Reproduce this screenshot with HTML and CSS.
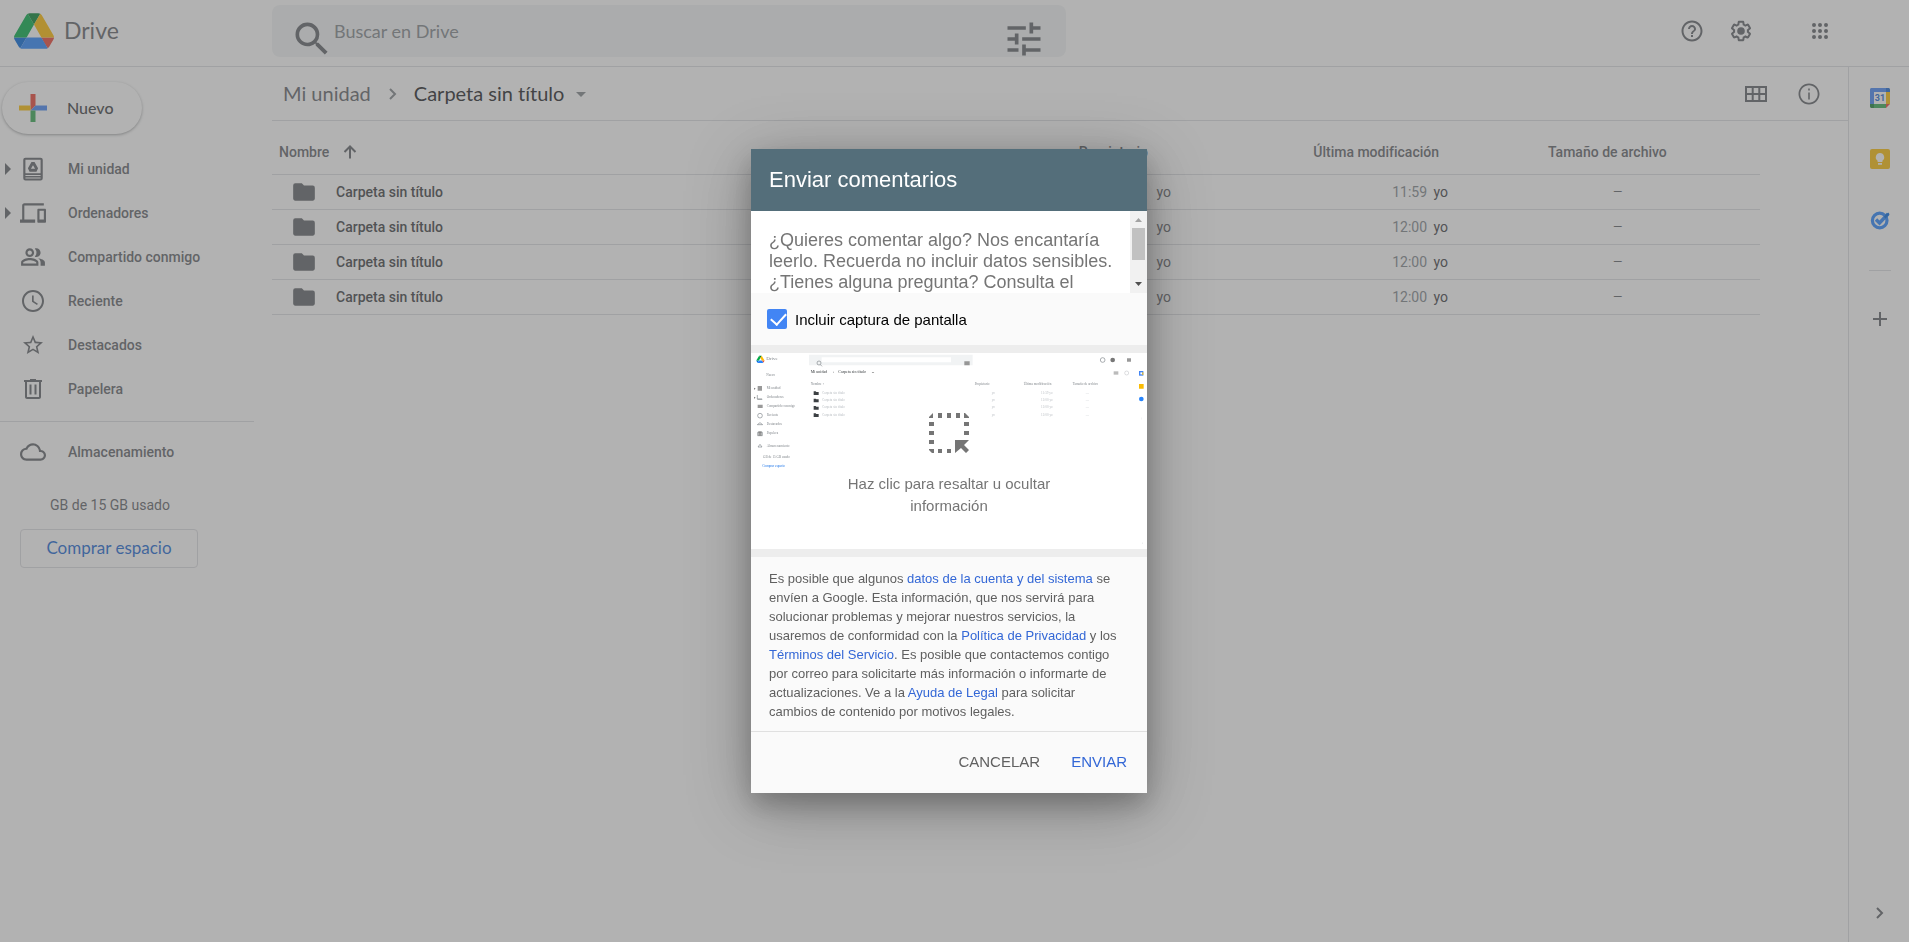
FILE: index.html
```html
<!DOCTYPE html>
<html lang="es">
<head>
<meta charset="utf-8">
<meta name="viewport" content="width=device-width, initial-scale=1">
<title>Carpeta sin título - Drive</title>
<link rel="stylesheet" href="styles.css">
</head>
<body>
<div class="app">
  <header class="topbar">
    <a class="brand" href="#">
      <svg class="brand-logo" viewBox="0 0 87.3 78" aria-hidden="true">
        <path fill="#0066da" d="m6.6 66.85 3.85 6.65c.8 1.4 1.95 2.5 3.3 3.3l13.75-23.8h-27.5c0 1.55.4 3.1 1.2 4.5z"/>
        <path fill="#00ac47" d="m43.65 25-13.75-23.8c-1.35.8-2.5 1.9-3.3 3.3l-25.4 44a9.06 9.06 0 0 0-1.2 4.5h27.5z"/>
        <path fill="#ea4335" d="m73.55 76.8c1.35-.8 2.5-1.9 3.3-3.3l1.6-2.75 7.65-13.25c.8-1.4 1.2-2.95 1.2-4.5h-27.502l5.852 11.5z"/>
        <path fill="#00832d" d="m43.65 25 13.75-23.8c-1.35-.8-2.9-1.2-4.5-1.2h-18.5c-1.6 0-3.15.45-4.5 1.2z"/>
        <path fill="#2684fc" d="m59.8 53h-32.3l-13.75 23.8c1.35.8 2.9 1.2 4.5 1.2h50.8c1.6 0 3.15-.45 4.5-1.2z"/>
        <path fill="#ffba00" d="m73.4 26.5-12.7-22c-.8-1.4-1.95-2.5-3.3-3.3l-13.75 23.8 16.15 28h27.45c0-1.55-.4-3.1-1.2-4.5z"/>
      </svg>
      <span class="brand-name">Drive</span>
    </a>
    <form class="search" role="search">
      <button class="search-button" type="button" aria-label="Buscar">
        <svg viewBox="0 0 24 24"><path d="M15.5 14h-.79l-.28-.27A6.47 6.47 0 0 0 16 9.5 6.5 6.5 0 1 0 9.5 16c1.61 0 3.09-.59 4.23-1.57l.27.28v.79l5 4.99L20.49 19l-4.99-5zm-6 0C7.01 14 5 11.99 5 9.5S7.01 5 9.5 5 14 7.01 14 9.5 11.99 14 9.5 14z"/></svg>
      </button>
      <input class="search-input" type="text" placeholder="Buscar en Drive" aria-label="Buscar en Drive">
      <button class="search-button" type="button" aria-label="Opciones de búsqueda">
        <svg viewBox="0 0 24 24"><path d="M3 17v2h6v-2H3zM3 5v2h10V5H3zm10 16v-2h8v-2h-8v-2h-2v6h2zM7 9v2H3v2h4v2h2V9H7zm14 4v-2H11v2h10zm-6-4h2V7h4V5h-4V3h-2v6z"/></svg>
      </button>
    </form>
    <div class="top-actions">
      <button class="icon-button" type="button" aria-label="Asistencia">
        <svg viewBox="0 0 24 24"><path d="M11 18h2v-2h-2v2zm1-16.500C6.200 1.500 1.500 6.200 1.500 12S6.200 22.500 12 22.500 22.500 17.800 22.500 12 17.800 1.500 12 1.500zm0 19c-4.700 0-8.500-3.800-8.500-8.500S7.300 3.500 12 3.500s8.500 3.800 8.500 8.500-3.800 8.500-8.500 8.500zM12 6c-2.210 0-4 1.790-4 4h2c0-1.100.9-2 2-2s2 .9 2 2c0 2-3 1.750-3 5h2c0-2.250 3-2.500 3-5 0-2.210-1.790-4-4-4z"/></svg>
      </button>
      <button class="icon-button" type="button" aria-label="Configuración">
        <svg viewBox="0 0 24 24"><path d="M13.85 22.25h-3.7c-.74 0-1.36-.54-1.45-1.27l-.27-1.89c-.27-.14-.53-.29-.79-.46l-1.8.72c-.7.26-1.47-.03-1.81-.65L2.2 15.53c-.35-.66-.2-1.44.36-1.88l1.53-1.19c-.01-.15-.02-.3-.02-.46 0-.15.01-.31.02-.46l-1.52-1.19c-.59-.45-.74-1.26-.37-1.88l1.85-3.19c.34-.62 1.11-.9 1.79-.63l1.81.73c.26-.17.52-.32.78-.46l.27-1.91c.09-.7.71-1.25 1.44-1.25h3.7c.74 0 1.36.54 1.45 1.27l.27 1.89c.27.14.53.29.79.46l1.8-.72c.71-.26 1.48.03 1.82.65l1.84 3.18c.36.66.2 1.44-.36 1.88l-1.52 1.19c.01.15.02.3.02.46s-.01.31-.02.46l1.52 1.19c.56.45.72 1.23.37 1.86l-1.86 3.22c-.34.62-1.11.9-1.8.63l-1.8-.72c-.26.17-.52.32-.78.46l-.27 1.91c-.1.68-.72 1.22-1.46 1.22zm-3.23-2h2.76l.37-2.55.53-.22c.44-.18.88-.44 1.34-.78l.45-.34 2.38.96 1.38-2.4-2.03-1.58.07-.56c.03-.26.06-.51.06-.78s-.03-.53-.06-.78l-.07-.56 2.03-1.58-1.39-2.4-2.39.96-.45-.35c-.42-.32-.87-.58-1.33-.77l-.52-.22-.37-2.55h-2.76l-.37 2.55-.53.21c-.44.19-.88.44-1.34.79l-.45.33-2.38-.95-1.39 2.39 2.03 1.58-.07.56a7 7 0 0 0-.06.79c0 .26.02.53.06.78l.07.56-2.03 1.58 1.38 2.4 2.39-.96.45.35c.43.33.86.58 1.33.77l.53.22.38 2.55z"/><circle cx="12" cy="12" r="3.8"/></svg>
      </button>
      <button class="icon-button apps" type="button" aria-label="Aplicaciones de Google">
        <svg viewBox="0 0 24 24"><path d="M6 8a2 2 0 1 0 0-4 2 2 0 0 0 0 4zm6 12a2 2 0 1 0 0-4 2 2 0 0 0 0 4zm-6 0a2 2 0 1 0 0-4 2 2 0 0 0 0 4zm0-6a2 2 0 1 0 0-4 2 2 0 0 0 0 4zm6 0a2 2 0 1 0 0-4 2 2 0 0 0 0 4zm4-8a2 2 0 1 0 4 0 2 2 0 0 0-4 0zm-4 2a2 2 0 1 0 0-4 2 2 0 0 0 0 4zm6 6a2 2 0 1 0 0-4 2 2 0 0 0 0 4zm0 6a2 2 0 1 0 0-4 2 2 0 0 0 0 4z"/></svg>
      </button>
    </div>
  </header>

  <div class="body">
    <aside class="sidebar">
      <button class="new-button" type="button">
        <svg viewBox="0 0 28 28" aria-hidden="true">
          <path fill="#ea4335" d="M11.500 0h5v11.500l-5 5z"/>
          <path fill="#4285f4" d="M28 11.500v5H11.500l5-5z"/>
          <path fill="#34a853" d="M11.500 16.500h5V28h-5z"/>
          <path fill="#fbbc04" d="M0 11.500h11.500v5H0z"/>
        </svg>
        <span class="new-label">Nuevo</span>
      </button>
      <nav class="nav">
        <a class="nav-item" href="#">
          <svg class="expand" viewBox="0 0 6 12"><path d="M0 0l6 6-6 6z"/></svg>
          <svg class="nav-icon wide" viewBox="0 0 24 24"><path fill-rule="evenodd" d="M5 1.500h14a2 2 0 0 1 2 2v17a2 2 0 0 1-2 2H5a2 2 0 0 1-2-2v-17a2 2 0 0 1 2-2zM5 3.500V16h14V3.500zM5 17.500v1h14v-1zM5 19.800v.9h14v-.9zM10.600 5.500h2.800l3.300 5.700-1.500 3.300H8.800l-1.500-3.300zM12 8.500l-1.900 3.300h3.800z"/></svg>
          <span>Mi unidad</span>
        </a>
        <a class="nav-item" href="#">
          <svg class="expand" viewBox="0 0 6 12"><path d="M0 0l6 6-6 6z"/></svg>
          <svg class="nav-icon wide" viewBox="0 0 24 24"><path d="M4 5h18V3H4c-1.100 0-2 .9-2 2v13H0v3h14v-3H4V5zm19 3h-6c-.55 0-1 .45-1 1v11c0 .55.45 1 1 1h6c.55 0 1-.45 1-1V9c0-.55-.45-1-1-1zm-1 10h-4v-8h4v8z"/></svg>
          <span>Ordenadores</span>
        </a>
        <a class="nav-item" href="#">
          <span class="expand"></span>
          <svg class="nav-icon wide" viewBox="0 0 24 24"><path d="M9 12c2.210 0 4-1.790 4-4s-1.790-4-4-4-4 1.790-4 4 1.790 4 4 4zm0-6c1.100 0 2 .9 2 2s-.9 2-2 2-2-.9-2-2 .9-2 2-2zm0 7c-2.670 0-8 1.340-8 4v3h16v-3c0-2.660-5.330-4-8-4zm6 5H3v-.99C3.200 16.290 6.300 15 9 15s5.800 1.290 6 2v1zM15 12c2.210 0 4-1.790 4-4s-1.790-4-4-4c-.47 0-.91.100-1.330.24a5.980 5.980 0 0 1 0 7.520c.42.140.86.240 1.330.240zm1.660 1.130C18.030 14.050 19 15.320 19 17v3h4v-3c0-2.180-3.570-3.470-6.340-3.870z"/></svg>
          <span>Compartido conmigo</span>
        </a>
        <a class="nav-item" href="#">
          <span class="expand"></span>
          <svg class="nav-icon" viewBox="0 0 24 24"><path d="M12 1C5.900 1 1 5.900 1 12s4.900 11 11 11 11-4.900 11-11S18.100 1 12 1zm0 20c-5 0-9-4-9-9s4-9 9-9 9 4 9 9-4 9-9 9zM12.700 6.500h-1.700v6.300l5 3.300.9-1.300-4.200-2.800z"/></svg>
          <span>Reciente</span>
        </a>
        <a class="nav-item" href="#">
          <span class="expand"></span>
          <svg class="nav-icon" viewBox="0 0 24 24"><path d="M22 9.240l-7.190-.62L12 2 9.190 8.630 2 9.240l5.460 4.730L5.820 21 12 17.270 18.180 21l-1.630-7.030L22 9.240zM12 15.400l-3.760 2.270 1-4.280-3.320-2.880 4.380-.38L12 6.100l1.710 4.040 4.380.38-3.320 2.880 1 4.280L12 15.400z"/></svg>
          <span>Destacados</span>
        </a>
        <a class="nav-item" href="#">
          <span class="expand"></span>
          <svg class="nav-icon" viewBox="0 0 24 24"><path d="M15 2H9v1H3v2h1v15c0 1.100.9 2 2 2h12c1.100 0 2-.9 2-2V5h1V3h-6V2zm3 18H6V5h12v15zM8.500 7.500h2v10h-2zm5 0h2v10h-2z"/></svg>
          <span>Papelera</span>
        </a>
      </nav>
      <div class="storage">
        <a class="nav-item" href="#">
          <span class="expand"></span>
          <svg class="nav-icon wide" viewBox="0 0 24 24"><path d="M19.350 10.040A7.490 7.490 0 0 0 12 4C9.110 4 6.600 5.640 5.350 8.040A5.994 5.994 0 0 0 0 14c0 3.310 2.690 6 6 6h13c2.760 0 5-2.240 5-5 0-2.640-2.050-4.780-4.650-4.960zM19 18H6c-2.210 0-4-1.790-4-4s1.790-4 4-4h.71C7.370 7.690 9.480 6 12 6c3.040 0 5.500 2.460 5.500 5.500v.5H19c1.660 0 3 1.340 3 3s-1.340 3-3 3z"/></svg>
          <span>Almacenamiento</span>
        </a>
        <p class="quota">GB de 15 GB usado</p>
        <button class="buy-button" type="button">Comprar espacio</button>
      </div>
    </aside>

    <main class="main">
      <div class="toolbar">
        <nav class="crumbs" aria-label="Ruta">
          <a class="crumb" href="#">Mi unidad</a>
          <svg class="crumb-sep" viewBox="0 0 8 12"><path d="M1 1l5 5-5 5" /></svg>
          <button class="crumb current" type="button">Carpeta sin título
            <svg class="caret" viewBox="0 0 10 5"><path d="M0 0h10L5 5z"/></svg>
          </button>
        </nav>
        <div class="view-actions">
          <button class="icon-button" type="button" aria-label="Diseño de cuadrícula">
            <svg viewBox="0 0 24 24"><path d="M1 4v16h22V4H1zm6.700 14H3v-5h4.700v5zm0-7H3V6h4.700v5zm6.600 7H9.700v-5h4.600v5zm0-7H9.700V6h4.600v5zM21 18h-4.700v-5H21v5zm0-7h-4.700V6H21v5z"/></svg>
          </button>
          <button class="icon-button" type="button" aria-label="Ver detalles">
            <svg viewBox="0 0 24 24"><path d="M11.200 17.500h1.600v-7h-1.600v7zM12 1.500C6.200 1.500 1.500 6.200 1.500 12S6.200 22.500 12 22.500 22.500 17.800 22.500 12 17.800 1.500 12 1.500zm0 19.200c-4.800 0-8.700-3.900-8.700-8.700S7.200 3.300 12 3.300s8.700 3.900 8.700 8.700-3.900 8.700-8.700 8.700zM11.200 8.500h1.600V6.500h-1.600v2z"/></svg>
          </button>
        </div>
      </div>
      <table class="files">
        <thead>
          <tr>
            <th class="name" scope="col"><span class="name-cell">Nombre <svg class="sort" viewBox="0 0 14 14"><path d="M7 13.500V1.500M1.500 7L7 1.500 12.500 7"/></svg></span></th>
            <th class="owner" scope="col">Propietario</th>
            <th class="modified" scope="col">Última modificación</th>
            <th class="size" scope="col">Tamaño de archivo</th>
          </tr>
        </thead>
        <tbody>
          <tr>
            <td class="name"><span class="name-cell"><svg class="folder" viewBox="0 0 24 24"><path d="M10 4H4a2 2 0 0 0-2 2v12c0 1.100.9 2 2 2h16c1.100 0 2-.9 2-2V8a2 2 0 0 0-2-2h-8l-2-2z"/></svg>Carpeta sin título</span></td>
            <td class="owner">yo</td><td class="modified">11:59 <span class="who">yo</span></td><td class="size">—</td>
          </tr>
          <tr>
            <td class="name"><span class="name-cell"><svg class="folder" viewBox="0 0 24 24"><path d="M10 4H4a2 2 0 0 0-2 2v12c0 1.100.9 2 2 2h16c1.100 0 2-.9 2-2V8a2 2 0 0 0-2-2h-8l-2-2z"/></svg>Carpeta sin título</span></td>
            <td class="owner">yo</td><td class="modified">12:00 <span class="who">yo</span></td><td class="size">—</td>
          </tr>
          <tr>
            <td class="name"><span class="name-cell"><svg class="folder" viewBox="0 0 24 24"><path d="M10 4H4a2 2 0 0 0-2 2v12c0 1.100.9 2 2 2h16c1.100 0 2-.9 2-2V8a2 2 0 0 0-2-2h-8l-2-2z"/></svg>Carpeta sin título</span></td>
            <td class="owner">yo</td><td class="modified">12:00 <span class="who">yo</span></td><td class="size">—</td>
          </tr>
          <tr>
            <td class="name"><span class="name-cell"><svg class="folder" viewBox="0 0 24 24"><path d="M10 4H4a2 2 0 0 0-2 2v12c0 1.100.9 2 2 2h16c1.100 0 2-.9 2-2V8a2 2 0 0 0-2-2h-8l-2-2z"/></svg>Carpeta sin título</span></td>
            <td class="owner">yo</td><td class="modified">12:00 <span class="who">yo</span></td><td class="size">—</td>
          </tr>
        </tbody>
      </table>
    </main>

    <aside class="rail">
      <button class="rail-button" type="button" aria-label="Calendar">
        <svg viewBox="0 0 20 20">
          <path fill="#fff" d="M4 4h12v12H4z"/>
          <path fill="#4285f4" d="M1.500 0H16v4H4v12H0V1.500C0 .7.7 0 1.500 0z"/>
          <path fill="#1967d2" d="M16 0h2.500c.8 0 1.500.7 1.500 1.500V4h-4z"/>
          <path fill="#fbbc04" d="M16 4h4v12h-4z"/>
          <path fill="#34a853" d="M4 16h12v4H4z"/>
          <path fill="#188038" d="M0 16h4v4H1.500C.7 20 0 19.300 0 18.500z"/>
          <path fill="#ea4335" d="M16 16h4l-4 4z"/>
          <text class="cal-day" x="10" y="13">31</text>
        </svg>
      </button>
      <button class="rail-button" type="button" aria-label="Keep">
        <svg viewBox="0 0 20 20">
          <rect width="20" height="20" rx="2" fill="#fbbc04"/>
          <path fill="#fff" d="M10 4a4.300 4.300 0 0 0-2.400 7.800V13h4.800v-1.200A4.300 4.300 0 0 0 10 4zM8 14h4v1.800H8z"/>
        </svg>
      </button>
      <button class="rail-button" type="button" aria-label="Tasks">
        <svg viewBox="0 0 20 20">
          <circle cx="9.700" cy="10.500" r="7.300" fill="none" stroke="#2684fc" stroke-width="3.200"/>
          <path d="M6 9.500l3.500 3.500 8.500-9" fill="none" stroke="#2684fc" stroke-width="3.400"/>
          <path d="M13.800 6.800l2-2.200L18.200 2.500l1.400 1.700-4 4.200z" fill="#0066da"/>
        </svg>
      </button>
      <hr class="rail-line">
      <button class="rail-button add" type="button" aria-label="Obtener complementos">
        <svg viewBox="0 0 14 14"><path d="M7 0v14M0 7h14"/></svg>
      </button>
      <button class="rail-button hide" type="button" aria-label="Ocultar panel lateral">
        <svg viewBox="0 0 8 12"><path d="M1 1l5 5-5 5"/></svg>
      </button>
    </aside>
  </div>
</div>

<div class="scrim">
  <section class="dialog" role="dialog" aria-modal="true" aria-labelledby="dialog-title">
    <h1 class="dialog-title" id="dialog-title">Enviar comentarios</h1>
    <div class="comment">
      <textarea class="comment-input" aria-label="Comentarios" placeholder="¿Quieres comentar algo? Nos encantaría leerlo. Recuerda no incluir datos sensibles. ¿Tienes alguna pregunta? Consulta el Centro de Ayuda."></textarea>
      <div class="scrollbar" aria-hidden="true">
        <svg viewBox="0 0 17 17"><path fill="#a3a3a3" d="M5 11l3.500-4 3.500 4z"/></svg>
        <div class="thumb"></div>
        <svg viewBox="0 0 17 17"><path fill="#505050" d="M5 6l3.500 4L12 6z"/></svg>
      </div>
    </div>
    <div class="capture">
      <input class="check" type="checkbox" id="capture" checked>
      <label for="capture">Incluir captura de pantalla</label>
    </div>
    <button class="preview" type="button">
      <svg class="shot" viewBox="0 0 1188 585" aria-hidden="true">
        <g transform="translate(16 8) scale(.28)">
          <path fill="#0066da" d="m6.600 66.850 3.850 6.650c.8 1.400 1.950 2.500 3.300 3.300l13.750-23.800h-27.500z"/>
          <path fill="#00ac47" d="m43.650 25-13.750-23.800-28.700 47.300-1.200 4.500h27.500z"/>
          <path fill="#ea4335" d="m73.550 76.800 12.550-19.300 1.200-4.500h-27.500z"/>
          <path fill="#00832d" d="m43.650 25 13.750-23.800-4.500-1.200h-18.500l-4.500 1.200z"/>
          <path fill="#2684fc" d="m59.800 53h-32.300l-13.750 23.800 4.500 1.200h50.800l4.500-1.200z"/>
          <path fill="#ffba00" d="m73.400 26.500-16-25.300-13.750 23.800 16.150 28h27.450z"/>
        </g>
        <path fill="#f1f3f4" d="M174 5h491v32H174z"/><path fill="#fff" d="M212 13h388v15H212z"/>
        <g class="shot-line"><circle cx="204" cy="30" r="6"/><path d="M208 35l5 5"/><circle cx="1055" cy="21" r="7"/><circle cx="1127" cy="60" r="6" opacity=".4"/><circle cx="27" cy="188" r="7"/><path d="M19 139h15M19 126v12h14M21 282l6-8 6 8h-12zM19 215l8-6 8 6zM20 238v10h14v-10z"/></g>
        <g fill="#777"><circle cx="1085" cy="21" r="7"/><path d="M20 99h13v14H20zM20 155h15v10H20zM22 235h10v13H22zM640 25h16v12h-16zM1128 16h12v10h-12z" opacity=".75"/><path d="M9 104l5 3-5 3zM9 131l5 3-5 3zM362 57h8l-4 3z"/><path d="M1088 55h14v10h-14z" opacity=".5"/></g>
        <path fill="#3c4043" d="M188 115h6l2 2h7v9h-15zM188 137h6l2 2h7v9h-15zM188 159h6l2 2h7v9h-15zM188 181h6l2 2h7v9h-15z"/>
        <path fill="#4285f4" d="M1164 54h13v14h-13z"/><path fill="#fff" d="M1168 58h6v6h-6z"/><path fill="#fbbc04" d="M1164 93h14v14h-14zM1174 58h3v8h-3z"/><circle cx="1171" cy="138" r="7" fill="#2684fc"/>
        <g class="shot-text">
          <text x="46" y="22" class="big">Drive</text><text x="46" y="69">Nuevo</text>
          <text x="47" y="108">Mi unidad</text><text x="47" y="135">Ordenadores</text><text x="47" y="162">Compartido conmigo</text><text x="47" y="189">Reciente</text><text x="47" y="216">Destacados</text><text x="47" y="244">Papelera</text><text x="47" y="283">Almacenamiento</text><text x="36" y="315">GB de 15 GB usado</text><text x="34" y="342" class="link">Comprar espacio</text>
          <g class="dark"><text x="179" y="61">Mi unidad</text><text x="246" y="61">›</text><text x="262" y="61">Carpeta sin título</text></g>
          <text x="179" y="97">Nombre ↑</text><text x="671" y="97">Propietario</text><text x="818" y="97">Última modificación</text><text x="965" y="97">Tamaño de archivo</text>
        </g>
        <g class="shot-text faint">
          <text x="213" y="122">Carpeta sin título</text><text x="722" y="122">yo</text><text x="870" y="122">11:59 yo</text><text x="1004" y="122">—</text>
          <text x="213" y="144">Carpeta sin título</text><text x="722" y="144">yo</text><text x="870" y="144">12:00 yo</text><text x="1004" y="144">—</text>
          <text x="213" y="166">Carpeta sin título</text><text x="722" y="166">yo</text><text x="870" y="166">12:00 yo</text><text x="1004" y="166">—</text>
          <text x="213" y="188">Carpeta sin título</text><text x="722" y="188">yo</text><text x="870" y="188">12:00 yo</text><text x="1004" y="188">—</text>
          <text x="1168" y="202">+</text><text x="1172" y="572">›</text>
        </g>
      </svg>
      <span class="preview-hint">
        <svg class="select-icon" viewBox="0 0 40 40" aria-hidden="true"><path d="M0 5V4l4-4v5zM9 0h4v5H9zM18 0h4v5h-4zM27 0h4v5h-4zM35 0h1l4 4v1h-5zM0 9h5v4H0zM0 18h5v4H0zM0 27h5v4H0zM0 36h5v4H3l-3-3zM9 36h4v4H9zM18 36h4v4h-4zM35 9h5v4h-5zM35 18h5v4h-5zM26 40V27h14l-5 5 5 5-3 3-5-5z"/></svg>
        <span>Haz clic para resaltar u ocultar información</span>
      </span>
    </button>
    <p class="legal">Es posible que algunos <a href="#">datos de la cuenta y del sistema</a> se envíen a Google. Esta información, que nos servirá para solucionar problemas y mejorar nuestros servicios, la usaremos de conformidad con la <a href="#">Política de Privacidad</a> y los <a href="#">Términos del Servicio</a>. Es posible que contactemos contigo por correo para solicitarte más información o informarte de actualizaciones. Ve a la <a href="#">Ayuda de Legal</a> para solicitar cambios de contenido por motivos legales.</p>
    <div class="dialog-actions">
      <button class="text-button" type="button">CANCELAR</button>
      <button class="text-button primary" type="button">ENVIAR</button>
    </div>
  </section>
</div>
</body>
</html>
```

FILE: styles.css
```css
* { box-sizing: border-box; }

body {
  margin: 0;
  font-family: Roboto, "Liberation Sans", sans-serif;
  font-size: 14px;
  font-variant-ligatures: none;
  color: #5f6368;
  background: #fff;
}

button {
  padding: 0;
  border: 0;
  background: none;
  font: inherit;
  font-variant-ligatures: none;
  color: inherit;
}

a { color: inherit; text-decoration: none; }
svg { display: block; flex: none; fill: #5f6368; }

.app { display: flex; flex-direction: column; height: 100vh; }

/* Top bar */
.topbar {
  display: flex;
  align-items: flex-start;
  height: 67px;
  padding-top: 5px;
  border-bottom: 1px solid #dadce0;
}

.brand {
  display: flex;
  align-items: center;
  gap: 10px;
  width: 272px;
  height: 52px;
  padding-left: 14px;
}

.brand-logo { width: 40px; height: 36px; }

.brand-name {
  padding-bottom: 2px;
  font-family: Lato, sans-serif;
  font-size: 23px;
}

.search {
  display: flex;
  flex: 0 1 794px;
  height: 52px;
  padding: 0 20px 0 18px;
  border-radius: 8px;
  background: #f1f3f4;
}

.search-button { width: 44px; height: 44px; margin-top: 12px; }
.search-button svg { width: 44px; height: 44px; }

.search-input {
  flex: 1;
  min-width: 0;
  height: 52px;
  padding: 0;
  border: 0;
  background: none;
  font: 18px Lato, sans-serif;
  color: #5f6368;
}

.search-input::placeholder { color: #80868b; }

.top-actions {
  display: flex;
  align-items: center;
  gap: 25px;
  height: 52px;
  margin-left: auto;
  padding-right: 77px;
}

.icon-button svg { width: 24px; height: 24px; }
.apps { margin-left: 30px; }

/* Layout under the top bar */
.body { display: flex; flex: 1; min-height: 0; }

.sidebar { width: 254px; margin-right: 18px; padding-top: 15px; flex: none; }

.new-button {
  display: flex;
  align-items: center;
  gap: 20px;
  height: 52px;
  margin: 0 0 13px 2px;
  padding: 0 28px 0 17px;
  border-radius: 26px;
  box-shadow: 0 1px 2px rgba(60, 64, 67, .3), 0 1px 3px 1px rgba(60, 64, 67, .15);
  font-family: Lato, sans-serif;
  font-size: 16px;
  font-weight: 500;
  color: #3c4043;
}

.new-button svg { width: 28px; height: 28px; }
.new-label { padding-bottom: 2px; }

.nav-item {
  display: flex;
  align-items: center;
  height: 44px;
  font-weight: 500;
}

.expand { width: 6px; height: 12px; margin-left: 5px; }
.nav-icon { width: 24px; height: 24px; margin: 0 23px 0 10px; }
.nav-icon.wide { width: 26px; height: 26px; margin: 0 22px 0 9px; }

.storage { margin-top: 10px; padding-top: 8px; border-top: 1px solid #dadce0; }

.quota { margin: 19px 0 12px 50px; line-height: 24px; }

.buy-button {
  width: 178px;
  height: 39px;
  margin-left: 20px;
  padding-bottom: 2px;
  border: 1px solid #dadce0;
  border-radius: 4px;
  font-family: Lato, sans-serif;
  font-size: 17px;
  color: #1967d2;
}

/* Main column */
.main { flex: 1; min-width: 0; }

.toolbar {
  display: flex;
  justify-content: space-between;
  height: 54px;
  padding: 0 27px 0 11px;
  border-bottom: 1px solid #dadce0;
}

.crumbs, .view-actions { display: flex; align-items: center; }
.view-actions { gap: 29px; }

.crumb {
  display: flex;
  align-items: center;
  gap: 12px;
  padding-bottom: 2px;
  font-family: Lato, sans-serif;
  font-size: 20px;
}

.crumb.current { color: #202124; }
.crumb-sep { width: 8px; height: 12px; margin: 0 17px 0 18px; fill: none; stroke: #80868b; stroke-width: 2; }
.caret { width: 10px; height: 5px; margin-top: 4px; fill: #80868b; }

.files {
  width: calc(100% - 88px);
  border-collapse: collapse;
  table-layout: fixed;
}

.files th { height: 53px; padding: 9px 0 0; text-align: left; font-weight: 500; }
.files td { height: 35px; padding: 0; }
.files tr { border-bottom: 1px solid #dadce0; }
.files th.name { padding-left: 7px; }
.files td.name { padding-left: 19px; font-weight: 500; color: #3c4043; }
.files .owner, .files .modified { width: 277px; text-align: right; color: #5f6368; }
.files td.modified { color: #80868b; }
.files th.owner { padding-right: 23px; }
.files th.modified { padding-right: 9px; }
.files .size { width: 312px; }
.files th.size { padding-left: 100px; }
.files td.size { padding-left: 165px; font-size: 12px; }

.name-cell { display: flex; align-items: center; gap: 19px; }
.files th .name-cell { gap: 14px; }
.folder { width: 26px; height: 26px; }
.sort { width: 14px; height: 14px; fill: none; stroke: #5f6368; stroke-width: 2; }
.who { margin-left: 3px; color: #3c4043; }

/* Add-on rail */
.rail {
  display: flex;
  flex-direction: column;
  align-items: center;
  width: 61px;
  flex: none;
  padding: 21px 0 23px 2px;
  border-left: 1px solid #dadce0;
}

.rail-button { height: 20px; margin-bottom: 41px; }
.rail-button svg { width: 20px; height: 20px; }
.cal-day { font: bold 9px Roboto, sans-serif; fill: #1967d2; text-anchor: middle; }
.rail-line { width: 22px; margin: -1px 0 41px; border: 0; border-top: 1px solid #dadce0; }
.rail-button.add { height: 14px; }
.rail-button.add svg { width: 14px; height: 14px; fill: none; stroke: #5f6368; stroke-width: 2; }
.rail-button.hide { height: 12px; margin: auto 0 0; }
.rail-button.hide svg { width: 8px; height: 12px; fill: none; stroke: #5f6368; stroke-width: 2; }

/* Feedback dialog */
.scrim {
  position: fixed;
  inset: 0;
  display: flex;
  justify-content: center;
  align-items: center;
  padding-right: 11px;
  background: rgba(102, 102, 102, .5);
}

.dialog {
  width: 396px;
  background: #fafafa;
  box-shadow: 0 12px 60px rgba(0, 0, 0, .3), 0 12px 24px rgba(0, 0, 0, .2);
  font-family: "Liberation Sans", Arial, sans-serif;
}

.dialog-title {
  margin: 0;
  padding: 0 18px;
  background: #546e7a;
  font-size: 22px;
  font-weight: 400;
  line-height: 62px;
  color: #fff;
}

.comment { display: flex; height: 82px; background: #fff; }

.comment-input {
  flex: 1;
  min-width: 0;
  padding: 19px 8px 0 18px;
  border: 0;
  background: none;
  font: 18px/21px "Liberation Sans", Arial, sans-serif;
  resize: none;
  overflow: hidden;
}

.comment-input::placeholder { color: #757575; }

.scrollbar { display: flex; flex-direction: column; width: 17px; background: #f1f1f1; }
.scrollbar svg { width: 17px; height: 17px; }
.thumb { height: 32px; margin: 0 2px auto; background: #c1c1c1; }

.capture {
  display: flex;
  align-items: center;
  gap: 8px;
  height: 52px;
  padding: 0 16px;
  font-size: 15px;
  color: #000;
}

.check {
  width: 20px;
  height: 20px;
  margin: 0;
  border-radius: 2px;
  appearance: none;
  background: #4285f4;
}

.check:checked::after {
  content: "";
  display: block;
  width: 7px;
  height: 13px;
  margin: 1px 0 0 7px;
  border: solid #fff;
  border-width: 0 2px 2px 0;
  transform: rotate(42deg);
}

.preview {
  display: grid;
  width: 100%;
  min-height: 212px;
  border: solid #ededed;
  border-width: 8px 0;
  background: #fff;
}

.preview > * { grid-area: 1 / 1; }
.shot { width: 100%; }
.shot-line { fill: none; stroke: #80868b; stroke-width: 2; }
.shot-text { font: 10px "Liberation Serif", serif; fill: #80868b; }
.shot-text .big { font-size: 15px; }
.shot-text .dark { font-size: 12px; fill: #3c4043; }
.shot-text .link { fill: #1a73e8; }
.shot-text.faint { fill: #bdc1c6; }

.preview-hint {
  display: flex;
  flex-direction: column;
  align-items: center;
  gap: 20px;
  padding: 60px 80px 0;
  font-size: 15px;
  line-height: 22px;
  color: #757575;
}

.select-icon { width: 40px; height: 40px; fill: #757575; }

.legal {
  margin: 0;
  padding: 12px 24px 10px 18px;
  font-size: 13px;
  line-height: 19px;
  color: #5f5f5f;
}

.legal a { color: #3367d6; }

.dialog-actions {
  display: flex;
  justify-content: flex-end;
  gap: 31px;
  padding: 20px 20px 21px;
  border-top: 1px solid #e0e0e0;
}

.text-button { font-size: 15px; line-height: 20px; color: #616161; }
.text-button.primary { color: #3367d6; }
```
